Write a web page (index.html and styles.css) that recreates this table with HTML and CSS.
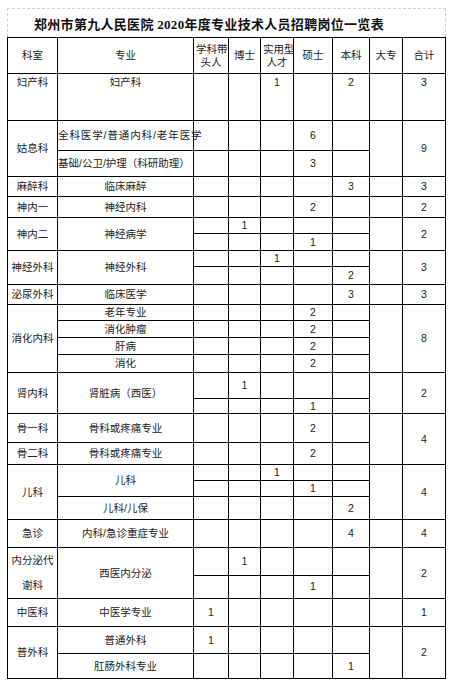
FILE: index.html
```html
<!DOCTYPE html>
<html lang="zh-CN">
<head>
<meta charset="utf-8">
<title>郑州市第九人民医院 2020年度专业技术人员招聘岗位一览表</title>
<link rel="stylesheet" href="styles.css">
</head>
<body>
<div class="sheet">
  <div class="title">郑州市第九人民医院 2020年度专业技术人员招聘岗位一览表</div>
  <table class="grid">
    <thead>
      <tr class="r36">
        <th class="c-a">科室</th>
        <th class="c-b">专业</th>
        <th class="c-c">学科带<br>头人</th>
        <th class="c-d">博士</th>
        <th class="c-e">实用型<br>人才</th>
        <th class="c-f">硕士</th>
        <th class="c-g">本科</th>
        <th class="c-h">大专</th>
        <th class="c-i">合计</th>
      </tr>
    </thead>
    <tbody>
      <tr class="r47 top"><td>妇产科</td><td>妇产科</td><td></td><td></td><td>1</td><td></td><td>2</td><td></td><td>3</td></tr>
      <tr class="r30"><td rowspan="2">姑息科</td><td class="spread">全科医学/普通内科/老年医学</td><td></td><td></td><td></td><td>6</td><td></td><td rowspan="2"></td><td rowspan="2">9</td></tr>
      <tr class="r26"><td class="flush">基础/公卫/护理（科研助理）</td><td></td><td></td><td></td><td>3</td><td></td></tr>
      <tr class="r20"><td>麻醉科</td><td>临床麻醉</td><td></td><td></td><td></td><td></td><td>3</td><td></td><td>3</td></tr>
      <tr class="r21"><td>神内一</td><td>神经内科</td><td></td><td></td><td></td><td>2</td><td></td><td></td><td>2</td></tr>
      <tr class="r16"><td rowspan="2">神内二</td><td rowspan="2">神经病学</td><td></td><td>1</td><td></td><td></td><td></td><td rowspan="2"></td><td rowspan="2">2</td></tr>
      <tr class="r17"><td></td><td></td><td></td><td>1</td><td></td></tr>
      <tr class="r16"><td rowspan="2">神经外科</td><td rowspan="2">神经外科</td><td></td><td></td><td>1</td><td></td><td></td><td rowspan="2"></td><td rowspan="2">3</td></tr>
      <tr class="r18"><td></td><td></td><td></td><td></td><td>2</td></tr>
      <tr class="r20"><td>泌尿外科</td><td>临床医学</td><td></td><td></td><td></td><td></td><td>3</td><td></td><td>3</td></tr>
      <tr class="r16"><td rowspan="4">消化内科</td><td>老年专业</td><td></td><td></td><td></td><td>2</td><td></td><td rowspan="4"></td><td rowspan="4">8</td></tr>
      <tr class="r17"><td>消化肿瘤</td><td></td><td></td><td></td><td>2</td><td></td></tr>
      <tr class="r17"><td>肝病</td><td></td><td></td><td></td><td>2</td><td></td></tr>
      <tr class="r18"><td>消化</td><td></td><td></td><td></td><td>2</td><td></td></tr>
      <tr class="r26"><td rowspan="2">肾内科</td><td rowspan="2">肾脏病（西医）</td><td></td><td>1</td><td></td><td></td><td></td><td rowspan="2"></td><td rowspan="2">2</td></tr>
      <tr class="r15"><td></td><td></td><td></td><td>1</td><td></td></tr>
      <tr class="r29"><td>骨一科</td><td>骨科或疼痛专业</td><td></td><td></td><td></td><td>2</td><td></td><td rowspan="2"></td><td rowspan="2">4</td></tr>
      <tr class="r22"><td>骨二科</td><td>骨科或疼痛专业</td><td></td><td></td><td></td><td>2</td><td></td></tr>
      <tr class="r16"><td rowspan="3">儿科</td><td rowspan="2">儿科</td><td></td><td></td><td>1</td><td></td><td></td><td rowspan="3"></td><td rowspan="3">4</td></tr>
      <tr class="r16"><td></td><td></td><td></td><td>1</td><td></td></tr>
      <tr class="r23"><td>儿科/儿保</td><td></td><td></td><td></td><td></td><td>2</td></tr>
      <tr class="r28"><td>急诊</td><td>内科/急诊重症专业</td><td></td><td></td><td></td><td></td><td>4</td><td></td><td>4</td></tr>
      <tr class="r27"><td rowspan="2" class="tall">内分泌代<br>谢科</td><td rowspan="2">西医内分泌</td><td></td><td>1</td><td></td><td></td><td></td><td rowspan="2"></td><td rowspan="2">2</td></tr>
      <tr class="r23"><td></td><td></td><td></td><td>1</td><td></td></tr>
      <tr class="r28"><td>中医科</td><td>中医学专业</td><td>1</td><td></td><td></td><td></td><td></td><td></td><td>1</td></tr>
      <tr class="r27"><td rowspan="2">普外科</td><td>普通外科</td><td>1</td><td></td><td></td><td></td><td></td><td rowspan="2"></td><td rowspan="2">2</td></tr>
      <tr class="r25"><td>肛肠外科专业</td><td></td><td></td><td></td><td></td><td>1</td></tr>
    </tbody>
  </table>
</div>
</body>
</html>
```
FILE: styles.css
```css
html, body {
  margin: 0;
  padding: 0;
  background: #fff;
}

body {
  font-family: "Liberation Sans", "Noto Sans CJK SC", sans-serif;
  color: #222;
}

.sheet {
  padding: 8px 0 0 7px;
  width: 439px;
}

.title {
  box-sizing: border-box;
  height: 29px;
  border: 1px dashed #cfcfcf;
  border-bottom: none;
  display: flex;
  align-items: center;
  padding-left: 26px;
  font-family: "Liberation Serif", "Noto Sans CJK SC", serif;
  font-weight: bold;
  font-size: 13px;
  letter-spacing: 0.3px;
  color: #111;
  white-space: nowrap;
}

.grid {
  border-collapse: separate;
  border-spacing: 0;
  table-layout: fixed;
  width: 439px;
  border-top: 1px solid #000;
  border-left: 1px solid #000;
  font-size: 10.5px;
  line-height: 13px;
}

.grid th,
.grid td {
  box-sizing: border-box;
  border-right: 1px solid #000;
  border-bottom: 1px solid #000;
  padding: 0 2px;
  text-align: center;
  vertical-align: middle;
  font-weight: normal;
  white-space: nowrap;
}

.c-a { width: 50px; }
.c-b { width: 136px; }
.c-c { width: 35px; }
.c-d { width: 32px; }
.c-e { width: 33px; }
.c-f { width: 39px; }
.c-g { width: 37px; }
.c-h { width: 33px; }
.c-i { width: 43px; }

.r15 { height: 15px; }
.r16 { height: 16px; }
.r17 { height: 17px; }
.r18 { height: 18px; }
.r20 { height: 20px; }
.r21 { height: 21px; }
.r22 { height: 22px; }
.r23 { height: 23px; }
.r25 { height: 25px; }
.r26 { height: 26px; }
.r27 { height: 27px; }
.r28 { height: 28px; }
.r29 { height: 29px; }
.r30 { height: 30px; }
.r36 { height: 36px; }
.r47 { height: 47px; }

.grid .top td {
  vertical-align: top;
  padding-top: 2px;
}

.grid td.spread {
  padding: 0;
  letter-spacing: 0.9px;
}

.grid td.flush {
  padding: 0;
  text-align: left;
}

.grid td.tall {
  line-height: 25px;
}
```
